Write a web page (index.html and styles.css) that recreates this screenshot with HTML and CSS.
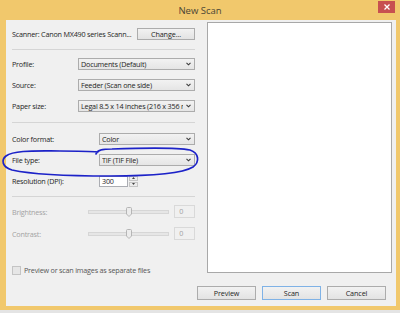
FILE: index.html
```html
<!DOCTYPE html>
<html lang="en">
<head>
    <meta charset="UTF-8">
    <meta name="viewport" content="width=device-width, initial-scale=1.0">
    <title>New Scan</title>
    <link rel="stylesheet" href="styles.css">
</head>
<body>
    <div class="window">
        <div class="titlebar">
            <span class="title">New Scan</span>
            <button class="close" aria-label="Close">
                <svg width="6" height="6" viewBox="0 0 6 6"><path d="M0.5 0.5 L5.5 5.5 M5.5 0.5 L0.5 5.5" stroke="#fff" stroke-width="1.3"/></svg>
            </button>
        </div>

        <div class="content">
            <div class="main">
                <div class="settings">
                    <div class="scanner-row">
                        <span class="scanner-name">Scanner: Canon MX490 series Scann...</span>
                        <button class="btn change">Change...</button>
                    </div>

                    <hr class="sep">

                    <div class="row">
                        <label class="lbl">Profile:</label>
                        <div class="combo">
                            <span class="combo-text">Documents (Default)</span>
                            <svg class="chev" width="5" height="4" viewBox="0 0 5 4"><path d="M0.5 0.8 L2.5 2.8 L4.5 0.8" fill="none" stroke="#3a3a3a" stroke-width="1.1"/></svg>
                        </div>
                    </div>
                    <div class="row">
                        <label class="lbl">Source:</label>
                        <div class="combo">
                            <span class="combo-text">Feeder (Scan one side)</span>
                            <svg class="chev" width="5" height="4" viewBox="0 0 5 4"><path d="M0.5 0.8 L2.5 2.8 L4.5 0.8" fill="none" stroke="#3a3a3a" stroke-width="1.1"/></svg>
                        </div>
                    </div>
                    <div class="row">
                        <label class="lbl">Paper size:</label>
                        <div class="combo">
                            <span class="combo-text">Legal 8.5 x 14 inches (216 x 356 mm)</span>
                            <svg class="chev" width="5" height="4" viewBox="0 0 5 4"><path d="M0.5 0.8 L2.5 2.8 L4.5 0.8" fill="none" stroke="#3a3a3a" stroke-width="1.1"/></svg>
                        </div>
                    </div>

                    <hr class="sep wide">

                    <div class="row">
                        <label class="lbl lbl-long">Color format:</label>
                        <div class="combo">
                            <span class="combo-text">Color</span>
                            <svg class="chev" width="5" height="4" viewBox="0 0 5 4"><path d="M0.5 0.8 L2.5 2.8 L4.5 0.8" fill="none" stroke="#3a3a3a" stroke-width="1.1"/></svg>
                        </div>
                    </div>
                    <div class="row">
                        <label class="lbl lbl-long">File type:</label>
                        <div class="combo">
                            <span class="combo-text">TIF (TIF File)</span>
                            <svg class="chev" width="5" height="4" viewBox="0 0 5 4"><path d="M0.5 0.8 L2.5 2.8 L4.5 0.8" fill="none" stroke="#3a3a3a" stroke-width="1.1"/></svg>
                        </div>
                    </div>
                    <div class="row">
                        <label class="lbl lbl-long">Resolution (DPI):</label>
                        <div class="spin">
                            <span class="spin-value">300</span>
                            <div class="spin-btns">
                                <span class="spin-btn"><svg width="3" height="2" viewBox="0 0 3 2"><path d="M0 2 L1.5 0 L3 2 Z" fill="#444"/></svg></span>
                                <span class="spin-btn"><svg width="3" height="2" viewBox="0 0 3 2"><path d="M0 0 L1.5 2 L3 0 Z" fill="#444"/></svg></span>
                            </div>
                        </div>
                    </div>

                    <hr class="sep">

                    <div class="row row-tall disabled">
                        <label class="lbl lbl-slider">Brightness:</label>
                        <div class="slider">
                            <svg class="thumb" width="6" height="10" viewBox="0 0 6 10"><path d="M0.5 1.5 Q0.5 0.5 1.5 0.5 H4.5 Q5.5 0.5 5.5 1.5 V7 L3 9.5 L0.5 7 Z" fill="#ececec" stroke="#b5b5b5"/></svg>
                        </div>
                        <span class="value-box">0</span>
                    </div>
                    <div class="row row-tall disabled">
                        <label class="lbl lbl-slider">Contrast:</label>
                        <div class="slider">
                            <svg class="thumb" width="6" height="10" viewBox="0 0 6 10"><path d="M0.5 1.5 Q0.5 0.5 1.5 0.5 H4.5 Q5.5 0.5 5.5 1.5 V7 L3 9.5 L0.5 7 Z" fill="#ececec" stroke="#b5b5b5"/></svg>
                        </div>
                        <span class="value-box">0</span>
                    </div>

                    <div class="check-row">
                        <span class="checkbox"></span>
                        <span>Preview or scan images as separate files</span>
                    </div>
                </div>

                <div class="preview"></div>
            </div>

            <div class="footer">
                <button class="btn action">Preview</button>
                <button class="btn action default">Scan</button>
                <button class="btn action">Cancel</button>
            </div>
        </div>

        <!-- hand drawn marker around the file type row -->
        <svg class="markup" width="400" height="313" viewBox="0 0 400 313">
            <path d="M96 154 C97 150 102 149 112 149 C140 148 175 147 190 150 C199 153 200 162 193 167 C180 175 140 176 110 176 C80 176 35 175 12 170 C2 167 1 160 6 156 C14 150 35 151 60 151 C75 151 88 151 98 152"
                  fill="none" stroke="#1c22c8" stroke-width="1.7" stroke-linecap="round"/>
        </svg>
    </div>
</body>
</html>
```

FILE: styles.css
```css
body {
    margin: 0;
    background: #e4e4e4;
    font-family: "Open Sans", "Noto Sans", sans-serif;
    font-size: 7.2px;
    letter-spacing: -0.2px;
    color: #1e1e1e;
}

.window {
    position: relative;
    width: 400px;
    height: 310px;
    background: #f1c86c;
    display: flex;
    flex-direction: column;
}

.titlebar {
    position: relative;
    height: 20px;
    display: flex;
    align-items: center;
    justify-content: center;
}

.title {
    font-size: 9.5px;
    letter-spacing: 0;
    color: #4a4535;
}

.close {
    position: absolute;
    top: 1px;
    right: 5px;
    width: 17px;
    height: 12px;
    padding: 0;
    border: none;
    background: #c75050;
    display: flex;
    align-items: center;
    justify-content: center;
}

.content {
    flex: 1;
    margin: 0 4px 4px 6px;
    background: #f0f0f0;
    display: flex;
    flex-direction: column;
}

.main {
    display: flex;
    gap: 6px;
    height: 253px;
}

.settings {
    width: 183px;
    padding: 8px 6px 0;
}

.scanner-row {
    display: flex;
    align-items: center;
    justify-content: space-between;
    height: 12px;
}

.scanner-name {
    white-space: nowrap;
}

.btn {
    font-family: inherit;
    font-size: 7.2px;
    letter-spacing: -0.1px;
    color: #1e1e1e;
    padding: 0;
    border: 1px solid #acacac;
    background: linear-gradient(#f2f2f2, #e3e3e3);
}

.change {
    flex: none;
    width: 58px;
    height: 12px;
}

.sep {
    height: 0;
    margin: 9px 0 0;
    border: none;
    border-top: 1px solid #d5d5d5;
}

.sep.wide {
    margin-top: 10px;
}

.row {
    display: flex;
    align-items: center;
    height: 12px;
    margin-top: 9px;
}

.sep + .row {
    margin-top: 8px;
}

.sep.wide + .row {
    margin-top: 10px;
}

.row-tall {
    height: 13px;
}

.lbl {
    width: 66px;
    flex: none;
}

.lbl-long {
    width: 87px;
}

.lbl-slider {
    width: 76px;
}

.combo {
    flex: 1;
    min-width: 0;
    height: 12px;
    box-sizing: border-box;
    border: 1px solid #acacac;
    background: linear-gradient(#f2f2f2, #e5e5e5);
    display: flex;
    align-items: center;
    padding: 0 3px 0 2px;
    gap: 3px;
}

.combo-text {
    flex: 1;
    min-width: 0;
    white-space: nowrap;
    overflow: hidden;
}

.chev {
    flex: none;
}

.spin {
    display: flex;
    height: 11px;
}

.spin-value {
    width: 29px;
    box-sizing: border-box;
    border: 1px solid #abadb3;
    background: #fff;
    padding-left: 2px;
    line-height: 9px;
}

.spin-btns {
    width: 9px;
    display: flex;
    flex-direction: column;
    gap: 1px;
    margin-left: 1px;
}

.spin-btn {
    flex: 1;
    border: 1px solid #c5c5c5;
    background: #ececec;
    display: flex;
    align-items: center;
    justify-content: center;
}

.disabled {
    color: #a3a3a3;
}

.slider {
    width: 80px;
    height: 2px;
    border: 1px solid #d6d6d6;
    background: #e6e6e6;
    display: flex;
    align-items: center;
    justify-content: center;
}

.thumb {
    flex: none;
}

.value-box {
    width: 21px;
    height: 13px;
    box-sizing: border-box;
    margin-left: 5px;
    border: 1px solid #d9d9d9;
    padding-left: 4px;
    line-height: 11px;
}

.check-row {
    display: flex;
    align-items: center;
    gap: 3px;
    height: 8px;
    margin-top: 26px;
    color: #575757;
}

.checkbox {
    width: 7px;
    height: 7px;
    border: 1px solid #c4c4c4;
    background: #e6e6e6;
}

.preview {
    width: 183px;
    height: 249px;
    margin-top: 2px;
    border: 1px solid #a8a8a8;
    background: #fff;
}

.footer {
    display: flex;
    justify-content: flex-end;
    gap: 6px;
    padding: 13px 10px 0 0;
}

.action {
    width: 59px;
    height: 14px;
}

.action.default {
    border-color: #7fb2e6;
}

.markup {
    position: absolute;
    top: 0;
    left: 0;
    pointer-events: none;
}
```
